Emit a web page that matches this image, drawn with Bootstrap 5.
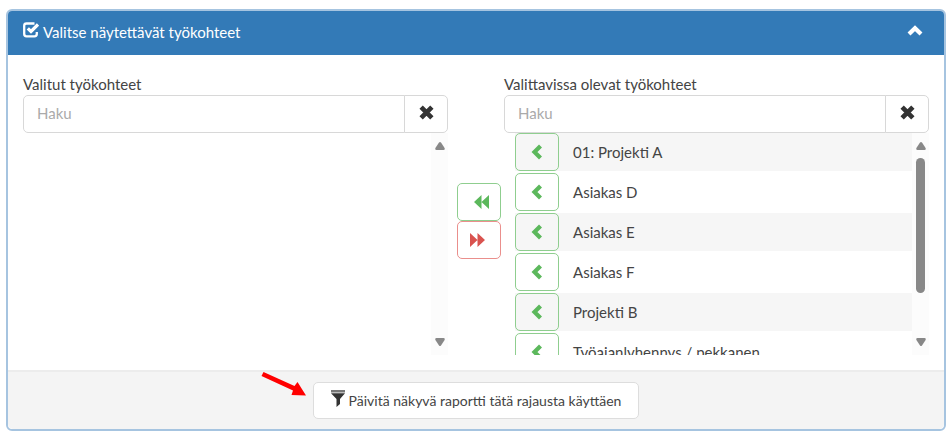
<!DOCTYPE html>
<html lang="fi">
<head>
<meta charset="utf-8">
<meta name="viewport" content="width=device-width, initial-scale=1">
<title>Valitse näytettävät työkohteet</title>
<link href="https://cdn.jsdelivr.net/npm/bootstrap@5.3.0/dist/css/bootstrap.min.css" rel="stylesheet">
<style>
  body { font-family: Lato, "Noto Sans", sans-serif; font-size: 15px; line-height: 20px; color: #444; background: #fff; padding: 9px 2px 4px 6px; }
  .panel { border: 2px solid #a6c4e0; border-radius: 6px; overflow: hidden; }
  .panel-top { background: #337ab7; color: #fff; margin: -2px -2px 0; padding: 12px 23px 12px 17px; min-height: 46px; border: 0; }
  .panel-main { padding: 20px 15px 15px; }
  .panel-foot { background: #f4f4f4; border-top: 2px solid #ececec; padding: 10px 8px; }
  svg { display: block; }
  .btn, .form-control { font-size: 15px; line-height: 20px; border-radius: 5px; }
  .field-name { line-height: 18px; padding-bottom: 2px; }
  .search-box { height: 38px; }
  .search-box .form-control { border: 1px solid #d8d8d8; padding: 7px 13px 9px; color: #444; }
  .search-box .form-control::placeholder { color: #aaa; }
  .btn-clear { width: 44px; border: 1px solid #d8d8d8; background: #fff; color: #333; }
  .mid-col { width: 56px; padding: 108px 2px 0 9px; }
  .btn-move { width: 44px; height: 38px; padding: 0; background: transparent; }
  .btn-pick { color: #5cb85c; border: 1px solid #8fce8f; }
  .btn-pick:hover { color: #fff; background: #5cb85c; }
  .btn-drop { color: #d9534f; border: 1px solid #ea8f8c; }
  .btn-drop:hover { color: #fff; background: #d9534f; }
  .pick-area { height: 222px; }
  .pick-list { padding-left: 11px; gap: 2px; }
  .pick-item { gap: 14px; flex: none; }
  .pick-item span { padding-bottom: 1px; }
  .pick-item:nth-child(odd) { background: #f6f6f6; }
  .scroll-track { width: 17px; padding: 9px 0; background: #fcfcfc; color: #888; }
  .scroll-thumb { width: 9px; height: 135px; border-radius: 5px; background: #888; margin-top: 8px; }
  .panel-foot .btn-update { font-size: 14px; line-height: 18px; background: #fff; border: 1px solid #ddd; color: #444; padding: 7px 17px; }
  .pointer-arrow { position: absolute; left: 252px; top: 0; }
</style>
<script src="https://cdn.jsdelivr.net/npm/bootstrap@5.3.0/dist/js/bootstrap.bundle.min.js"></script>
</head>
<body>
<svg class="d-none" aria-hidden="true">
  <symbol id="cross" viewBox="0 0 14 14"><path d="M2 2 12 12M12 2 2 12" fill="none" stroke="currentColor" stroke-width="4.400"/></symbol>
  <symbol id="chevron" viewBox="0 0 11 16"><path d="M9 2 3 8 9 14" fill="none" stroke="currentColor" stroke-width="4.200"/></symbol>
  <symbol id="up" viewBox="0 0 10 8"><path d="M4 .6Q5 -.4 6 .6L9.600 6Q10.200 8 8.500 8H1.500Q-.2 8 .4 6Z" fill="currentColor"/></symbol>
  <symbol id="down" viewBox="0 0 10 8"><path d="M4 7.400Q5 8.400 6 7.400L9.600 2Q10.200 0 8.500 0H1.500Q-.2 0 .4 2Z" fill="currentColor"/></symbol>
</svg>
<main class="card panel">
  <div class="card-header panel-top d-flex align-items-center justify-content-between">
    <div class="d-flex align-items-center gap-1">
      <svg class="mb-1" width="16" height="16" viewBox="0 0 16 16" fill="none" stroke="#fff" aria-hidden="true"><path d="M11.500 1.500H3.500Q1.200 1.500 1.200 3.800V12Q1.200 14.300 3.500 14.300H11.500Q13.800 14.300 13.800 12V10" stroke-width="2.300"/><path d="M4.800 6.300 8 9.500 15 2.500" stroke-width="3.200"/></svg>
      <span>Valitse näytettävät työkohteet</span>
    </div>
    <button type="button" class="btn p-0 border-0 text-white mb-1" aria-label="Pienennä"><svg width="16" height="11" viewBox="0 0 16 11"><path d="M2 9 8 3.200 14 9" fill="none" stroke="currentColor" stroke-width="4.200"/></svg></button>
  </div>
  <div class="card-body panel-main d-flex">
    <section class="flex-fill w-50">
      <label class="field-name d-block" for="chosen-search">Valitut työkohteet</label>
      <div class="input-group flex-nowrap search-box">
        <input id="chosen-search" type="text" class="form-control" placeholder="Haku">
        <button type="button" class="btn btn-clear d-flex align-items-center justify-content-center px-0 pt-0 pb-1" aria-label="Tyhjennä"><svg width="15" height="15"><use href="#cross"/></svg></button>
      </div>
      <div class="pick-area d-flex justify-content-end">
        <div class="scroll-track d-flex flex-column align-items-center justify-content-between">
          <svg width="12" height="8"><use href="#up"/></svg>
          <svg width="12" height="8"><use href="#down"/></svg>
        </div>
      </div>
    </section>
    <div class="mid-col d-flex flex-column flex-shrink-0">
      <button type="button" class="btn btn-move btn-pick d-flex align-items-center justify-content-center" aria-label="Lisää kaikki"><svg class="ms-1" width="15" height="14" viewBox="0 0 15 14"><path d="M0 7 7.500 0V14ZM7.500 7 15 0V14Z" fill="currentColor"/></svg></button>
      <button type="button" class="btn btn-move btn-drop d-flex align-items-center justify-content-center" aria-label="Poista kaikki"><svg class="me-1" width="15" height="14" viewBox="0 0 15 14"><path d="M15 7 7.500 0V14ZM7.500 7 0 0V14Z" fill="currentColor"/></svg></button>
    </div>
    <section class="flex-fill w-50">
      <label class="field-name d-block" for="available-search">Valittavissa olevat työkohteet</label>
      <div class="input-group flex-nowrap search-box">
        <input id="available-search" type="text" class="form-control" placeholder="Haku">
        <button type="button" class="btn btn-clear d-flex align-items-center justify-content-center px-0 pt-0 pb-1" aria-label="Tyhjennä"><svg width="15" height="15"><use href="#cross"/></svg></button>
      </div>
      <div class="pick-area d-flex">
        <ul class="pick-list list-unstyled d-flex flex-column flex-fill overflow-hidden mb-0">
          <li class="pick-item d-flex align-items-center"><button type="button" class="btn btn-move btn-pick d-flex align-items-center justify-content-center" aria-label="Valitse 01: Projekti A"><svg width="12" height="16"><use href="#chevron"/></svg></button><span>01: Projekti A</span></li>
          <li class="pick-item d-flex align-items-center"><button type="button" class="btn btn-move btn-pick d-flex align-items-center justify-content-center" aria-label="Valitse Asiakas D"><svg width="12" height="16"><use href="#chevron"/></svg></button><span>Asiakas D</span></li>
          <li class="pick-item d-flex align-items-center"><button type="button" class="btn btn-move btn-pick d-flex align-items-center justify-content-center" aria-label="Valitse Asiakas E"><svg width="12" height="16"><use href="#chevron"/></svg></button><span>Asiakas E</span></li>
          <li class="pick-item d-flex align-items-center"><button type="button" class="btn btn-move btn-pick d-flex align-items-center justify-content-center" aria-label="Valitse Asiakas F"><svg width="12" height="16"><use href="#chevron"/></svg></button><span>Asiakas F</span></li>
          <li class="pick-item d-flex align-items-center"><button type="button" class="btn btn-move btn-pick d-flex align-items-center justify-content-center" aria-label="Valitse Projekti B"><svg width="12" height="16"><use href="#chevron"/></svg></button><span>Projekti B</span></li>
          <li class="pick-item d-flex align-items-center"><button type="button" class="btn btn-move btn-pick d-flex align-items-center justify-content-center" aria-label="Valitse Työajanlyhennys / pekkanen"><svg width="12" height="16"><use href="#chevron"/></svg></button><span>Työajanlyhennys / pekkanen</span></li>
        </ul>
        <div class="scroll-track d-flex flex-column align-items-center justify-content-between">
          <div class="d-flex flex-column align-items-center">
            <svg width="12" height="8"><use href="#up"/></svg>
            <div class="scroll-thumb"></div>
          </div>
          <svg width="12" height="8"><use href="#down"/></svg>
        </div>
      </div>
    </section>
  </div>
  <div class="card-footer panel-foot d-flex justify-content-center position-relative">
    <svg class="pointer-arrow" width="46" height="26" viewBox="0 0 46 26" aria-hidden="true"><path d="M3.500 0 34.500 14 37.500 10 46 23.500 31.500 23 33 18.500 1.500 4Z" fill="#f00"/></svg>
    <button type="button" class="btn btn-update d-flex align-items-center gap-1"><svg class="mb-1 flex-shrink-0" width="14" height="17" viewBox="0 0 14 17" aria-hidden="true"><path d="M0 0H14V2.500H0Z" fill="#777"/><path d="M0 3.200H14L9 9V14L5.500 17V9Z" fill="#333"/></svg><span>Päivitä näkyvä raportti tätä rajausta käyttäen</span></button>
  </div>
</main>
</body>
</html>
